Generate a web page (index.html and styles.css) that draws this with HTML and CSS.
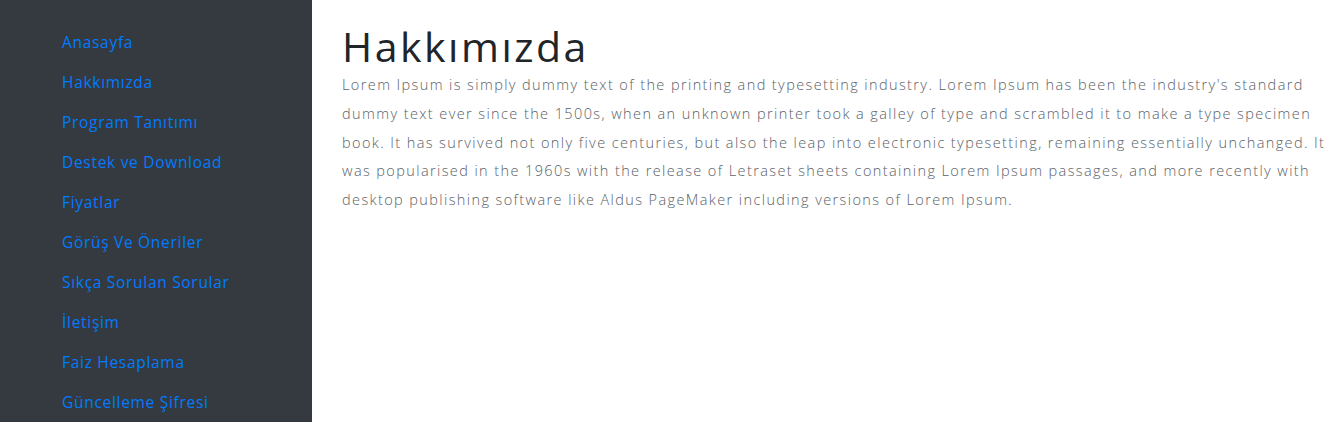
FILE: index.html
```html
<!DOCTYPE html>
<html lang="tr">
<head>
<meta charset="utf-8">
<title>Hakkımızda</title>
<link rel="stylesheet" href="styles.css">
</head>
<body>
<div class="layout">
  <aside class="sidebar">
    <ul class="nav">
      <li><a href="#">Anasayfa</a></li>
      <li><a href="#">Hakkımızda</a></li>
      <li><a href="#">Program Tanıtımı</a></li>
      <li><a href="#">Destek ve Download</a></li>
      <li><a href="#">Fiyatlar</a></li>
      <li><a href="#">Görüş Ve Öneriler</a></li>
      <li><a href="#">Sıkça Sorulan Sorular</a></li>
      <li><a href="#">İletişim</a></li>
      <li><a href="#">Faiz Hesaplama</a></li>
      <li><a href="#">Güncelleme Şifresi</a></li>
    </ul>
  </aside>
  <main class="content">
    <h1 class="title">Hakkımızda</h1>
    <p class="text">Lorem Ipsum is simply dummy text of the printing and typesetting industry. Lorem Ipsum has been the industry's standard dummy text ever since the 1500s, when an unknown printer took a galley of type and scrambled it to make a type specimen book. It has survived not only five centuries, but also the leap into electronic typesetting, remaining essentially unchanged. It was popularised in the 1960s with the release of Letraset sheets containing Lorem Ipsum passages, and more recently with desktop publishing software like Aldus PageMaker including versions of Lorem Ipsum.</p>
  </main>
</div>
</body>
</html>
```
FILE: styles.css
```css
html, body {
  margin: 0;
  padding: 0;
  height: 100%;
}
body {
  font-family: "Open Sans", "Liberation Sans", sans-serif;
  background: #ffffff;
  overflow: hidden;
}
.layout {
  display: flex;
  min-height: 100vh;
}
.sidebar {
  width: 312px;
  flex: 0 0 312px;
  background: #343a40;
}
.nav {
  list-style: none;
  margin: 0;
  padding: 22px 0 0 62px;
}
.nav li {
  height: 40px;
  line-height: 40px;
}
.nav a {
  color: #007bff;
  text-decoration: none;
  font-size: 15.5px;
  letter-spacing: 0.7px;
  font-weight: 400;
}
.content {
  flex: 1;
  padding: 22px 0 0 30px;
  min-width: 0;
}
.title {
  margin: 0;
  font-size: 41px;
  line-height: 48px;
  letter-spacing: 2.5px;
  font-weight: 500;
  color: #212529;
}
.text {
  margin: 1px 0 0;
  font-size: 14.5px;
  line-height: 28.8px;
  letter-spacing: 1.4px;
  font-weight: 300;
  color: #5a6168;
}
```
